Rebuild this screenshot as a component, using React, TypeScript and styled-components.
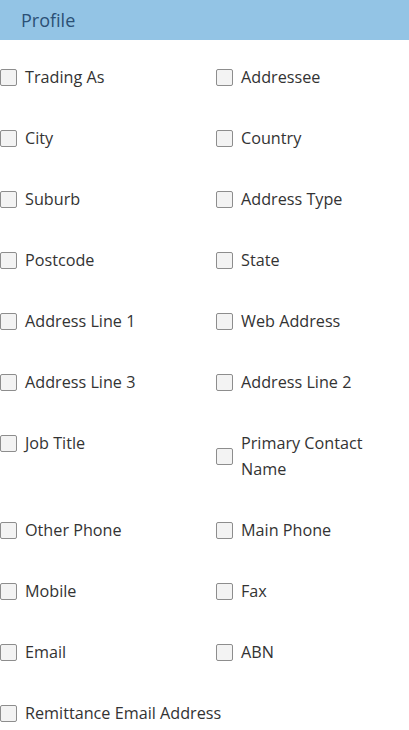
import React from "react";
import styled, { createGlobalStyle } from "styled-components";

const Global = createGlobalStyle`
  html, body { margin: 0; padding: 0; background: #fff; }
  body { font-family: "Open Sans", "Noto Sans", sans-serif; }
`;

const Page = styled.div`
  width: 409px;
`;

const Header = styled.div`
  height: 40px;
  background: #93c4e5;
  display: flex;
  align-items: center;
  padding-left: 21px;
  font-size: 18px;
  color: #2b5075;
`;

const Grid = styled.div`
  display: grid;
  grid-template-columns: 216px 1fr;
  row-gap: 35px;
  padding: 24px 24px 0 0;
  align-items: start;
`;

const Cell = styled.label<{ $wide?: boolean }>`
  display: flex;
  align-items: center;
  gap: 8px;
  font-size: 16.2px;
  line-height: 26px;
  color: #333;
  grid-column: ${(p) => (p.$wide ? "1 / -1" : "auto")};
`;

const Box = styled.span`
  flex: none;
  box-sizing: border-box;
  width: 17px;
  height: 17px;
  border: 1px solid #8d8d8d;
  border-radius: 2px;
  background: #f3f3f3;
`;

const fields = [
  "Trading As", "Addressee",
  "City", "Country",
  "Suburb", "Address Type",
  "Postcode", "State",
  "Address Line 1", "Web Address",
  "Address Line 3", "Address Line 2",
  "Job Title", "Primary Contact Name",
  "Other Phone", "Main Phone",
  "Mobile", "Fax",
  "Email", "ABN",
  "Remittance Email Address",
];

export default function App() {
  return (
    <Page>
      <Global />
      <Header>Profile</Header>
      <Grid>
        {fields.map((f, i) => (
          <Cell key={f} $wide={i === fields.length - 1 && i % 2 === 0}>
            <Box />
            <span>{f}</span>
          </Cell>
        ))}
      </Grid>
    </Page>
  );
}
